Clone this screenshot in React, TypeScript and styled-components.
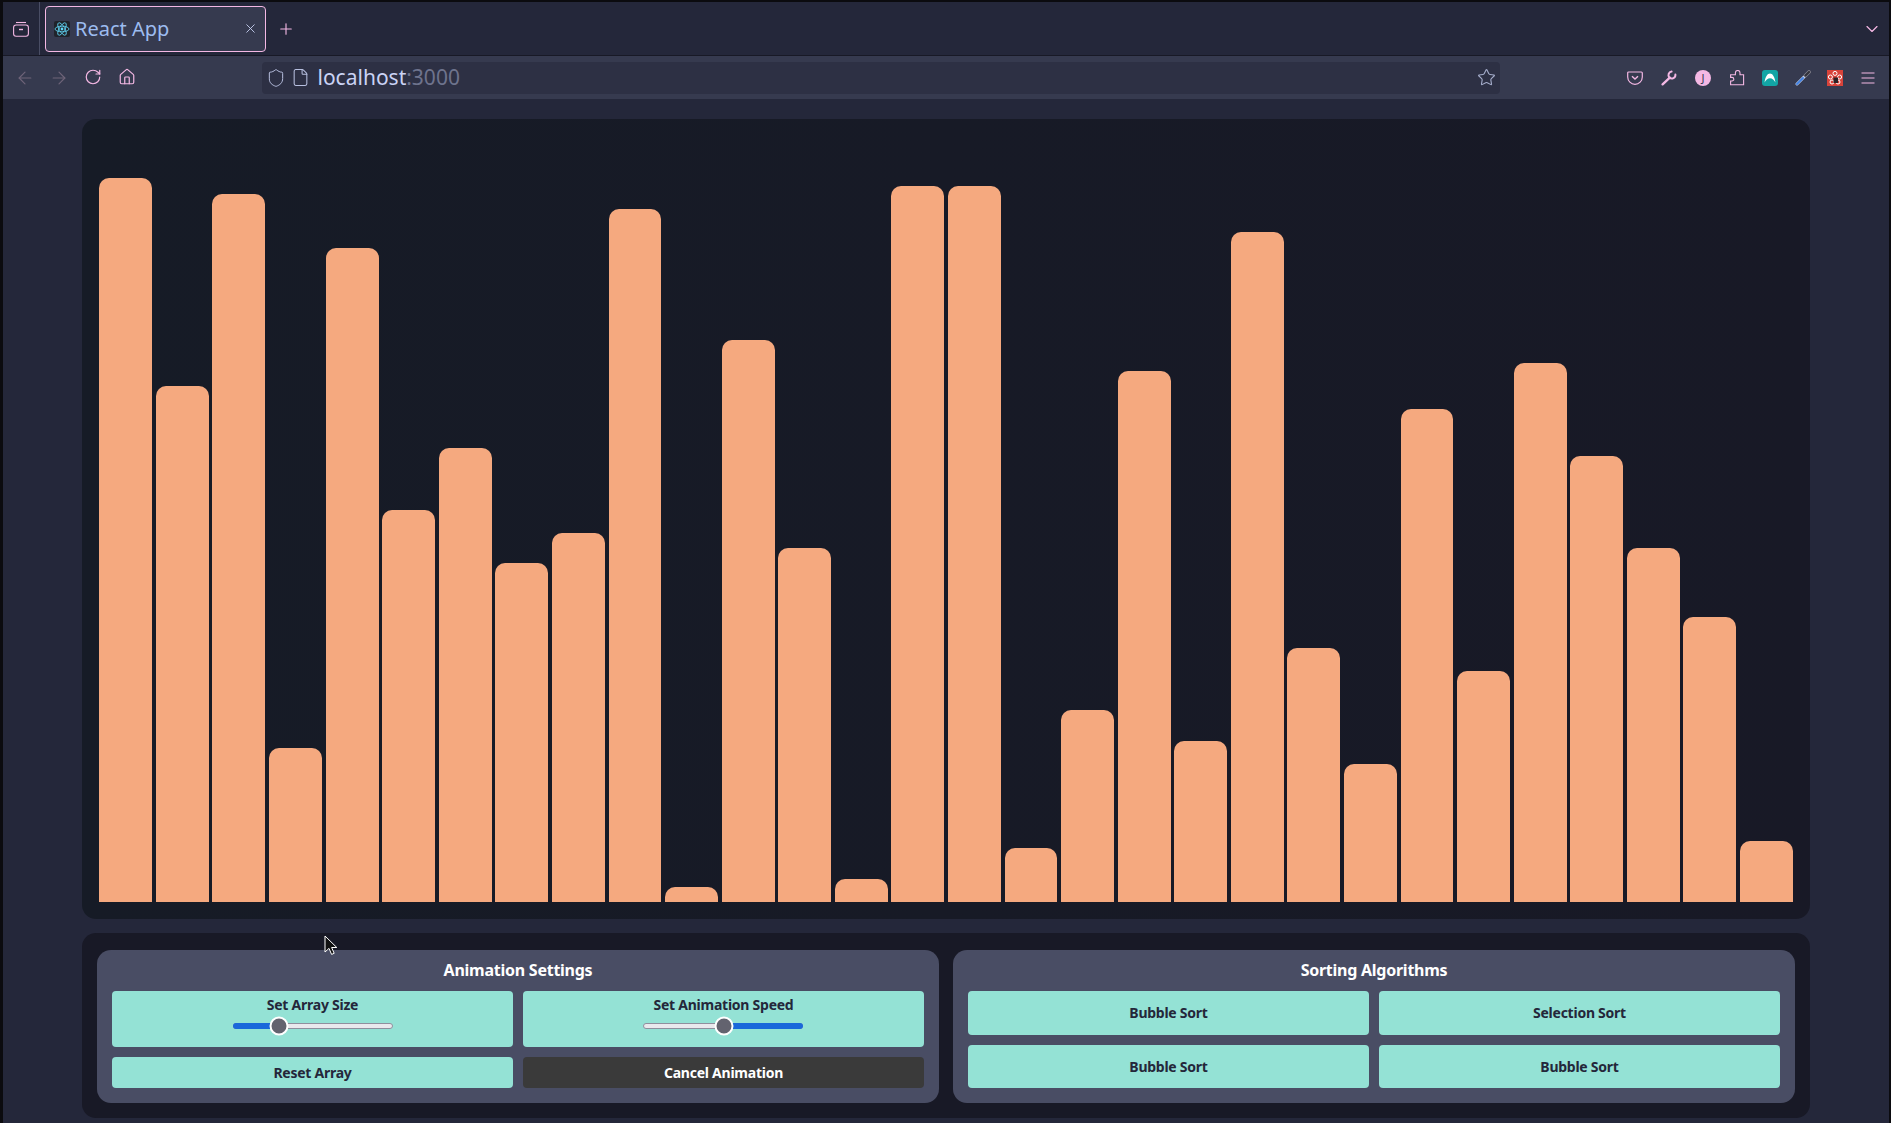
import styled, { createGlobalStyle } from "styled-components";
import {
    ArrowLeft,
    ArrowRight,
    ChevronDown,
    File,
    Home,
    Plus,
    RotateCw,
    Shield,
    Star,
    X
} from "lucide-react";

const PINK = "#f4b8e4";

const GlobalStyle = createGlobalStyle`
    * {
        box-sizing: border-box;
    }

    html, body {
        margin: 0;
        background: #000;
        font-family: "Noto Sans", sans-serif;
    }
`;

const Screen = styled.div`
    position: relative;
    width: 1891px;
    height: 1123px;
    padding: 2px 2px 0 3px;
    background: #0b0b0f;
    overflow: hidden;
`;

const Window = styled.div`
    display: flex;
    flex-direction: column;
    height: 100%;
`;

const TabStrip = styled.div`
    display: flex;
    align-items: center;
    height: 54px;
    flex-shrink: 0;
    background: #24273a;
    border-bottom: 1px solid #181926;
`;

const ViewButton = styled.div`
    display: flex;
    align-items: center;
    justify-content: center;
    width: 37px;
    height: 53px;
    border-right: 1px solid #494d64;
`;

const Tab = styled.div`
    display: flex;
    align-items: center;
    width: 221px;
    height: 46px;
    margin-left: 5px;
    padding: 0 7px 0 8px;
    border: 1px solid ${PINK};
    border-radius: 4px;
    background: #363a4f;
`;

const TabTitle = styled.span`
    flex: 1;
    margin-left: 5px;
    font-size: 20px;
    color: #9dbcf0;
`;

const NewTab = styled.div`
    display: flex;
    margin-left: 11px;
`;

const TabSpacer = styled.div`
    flex: 1;
`;

const ListTabs = styled.div`
    display: flex;
    margin-right: 7px;
`;

const Toolbar = styled.div`
    display: flex;
    align-items: center;
    height: 43px;
    flex-shrink: 0;
    padding-left: 5px;
    background: #363a4f;
`;

const NavIcons = styled.div`
    display: grid;
    grid-template-columns: repeat(4, 34px);
    justify-items: center;
    width: 254px;
`;

const UrlBar = styled.div`
    display: flex;
    align-items: center;
    gap: 5px;
    width: 1238px;
    height: 32px;
    padding: 0 4px;
    border-radius: 4px;
    background: #2d3044;
`;

const UrlText = styled.div`
    flex: 1;
    padding: 0 0 2px 2.5px;
    font-size: 21px;
    color: #cad3f5;
`;

const UrlPort = styled.span`
    color: #6e738d;
`;

const ExtensionIcons = styled.div`
    display: flex;
    align-items: center;
    gap: 18px;
    margin-left: 127px;
`;

const ExtensionGroup = styled.div`
    display: flex;
    align-items: center;
    gap: 16.5px;
    margin-left: -1px;
`;

const Page = styled.main`
    flex: 1;
    display: flex;
    flex-direction: column;
    align-items: center;
    gap: 14px;
    padding-top: 20px;
    background: #24273a;
`;

const Chart = styled.section`
    display: flex;
    align-items: flex-end;
    gap: 3.7px;
    width: 1728px;
    height: 800px;
    padding: 13.2px 17px 16.8px 17.3px;
    border-radius: 14px;
    background: linear-gradient(90deg, #161b26, #181926);
`;

const Bar = styled.div`
    flex: 1;
    border-radius: 10px 10px 0 0;
    background: #f5a97f;
`;

const Controls = styled.section`
    display: grid;
    grid-template-columns: 1fr 1fr;
    gap: 14px;
    width: 1728px;
    height: 185px;
    padding: 17px 15px 15px;
    border-radius: 14px;
    background: #181926;
`;

const Card = styled.div`
    display: flex;
    flex-direction: column;
    padding: 9px 15px 15px;
    border-radius: 14px;
    background: #494d64;
`;

const CardTitle = styled.h2`
    margin: 0 0 10px;
    font-size: 16px;
    line-height: 22px;
    font-weight: 700;
    letter-spacing: -0.25px;
    text-align: center;
    color: #fff;
`;

const ButtonGrid = styled.div<{ $rows: string }>`
    flex: 1;
    display: grid;
    grid-template-columns: 1fr 1fr;
    grid-template-rows: ${(p) => p.$rows};
    gap: 10px;
`;

const ActionButton = styled.button<{ $dark?: boolean }>`
    padding: 0 0 1px;
    border: 0;
    border-radius: 4px;
    font-family: inherit;
    font-size: 14px;
    font-weight: 700;
    letter-spacing: -0.25px;
    color: ${(p) => (p.$dark ? "#fff" : "#24273a")};
    background: ${(p) => (p.$dark ? "#3a3a3a" : "#94e2d5")};
`;

const SliderBox = styled.div`
    display: flex;
    flex-direction: column;
    align-items: center;
    padding-top: 4px;
    border-radius: 4px;
    background: #94e2d5;
`;

const SliderLabel = styled.label`
    font-size: 14px;
    line-height: 19px;
    font-weight: 700;
    letter-spacing: -0.25px;
    color: #24273a;
`;

const Track = styled.div<{ $reverse?: boolean }>`
    position: relative;
    display: flex;
    flex-direction: ${(p) => (p.$reverse ? "row-reverse" : "row")};
    width: 160px;
    height: 6px;
    margin-top: 9px;
    margin-left: ${(p) => (p.$reverse ? "-1px" : "0")};
    border: 1px solid #8f8f9d;
    border-radius: 3px;
    background: #e9e9ed;
`;

const TrackFill = styled.div`
    margin: -1px;
    border-radius: 3px;
    background: #1a68da;
`;

const Thumb = styled.div`
    position: absolute;
    top: 50%;
    width: 19px;
    height: 19px;
    transform: translate(-50%, -50%);
    border: 2px solid #fff;
    border-radius: 50%;
    background: #63636f;
`;

const PointerArrow = styled.svg`
    position: absolute;
    left: 324px;
    top: 935px;
`;

const Avatar = styled.div`
    display: flex;
    align-items: center;
    justify-content: center;
    width: 16px;
    height: 16px;
    border-radius: 50%;
    font-size: 11px;
    color: #363a4f;
    background: ${PINK};
`;

const barValues = [
    94, 67, 92, 20, 85, 51, 59, 44, 48, 90, 2, 73, 46, 3, 93, 93, 7, 25, 69, 21,
    87, 33, 18, 64, 30, 70, 58, 46, 37, 8
];

function ReactFavicon() {
    return (
        <svg width="16" height="16" viewBox="0 0 16 16">
            <rect width="16" height="16" rx="2" fill="#20232a" />
            <g fill="none" stroke="#61dafb" strokeWidth="0.8">
                <ellipse cx="8" cy="8" rx="7" ry="2.8" />
                <ellipse cx="8" cy="8" rx="7" ry="2.8" transform="rotate(60 8 8)" />
                <ellipse cx="8" cy="8" rx="7" ry="2.8" transform="rotate(120 8 8)" />
            </g>
            <circle cx="8" cy="8" r="1.4" fill="#61dafb" />
        </svg>
    );
}

function FirefoxViewIcon() {
    return (
        <svg width="16" height="16" viewBox="0 0 16 16" fill="none" stroke={PINK} strokeWidth="1.1">
            <path d="M3 1.5h10" />
            <rect x="0.6" y="4" width="14.8" height="11.2" rx="2.5" />
            <path d="M6 8.5h4" strokeWidth="1.4" />
        </svg>
    );
}

function PocketIcon() {
    return (
        <svg width="16" height="16" viewBox="0 0 16 16" fill="none" stroke={PINK} strokeWidth="1.2">
            <path d="M1.6 2h12.8a.9.9 0 0 1 .9.9V7a7.3 7.3 0 0 1-14.6 0V2.9a.9.9 0 0 1 .9-.9z" />
            <path d="M5 6.2l3 2.8 3-2.8" strokeWidth="1.4" />
        </svg>
    );
}

function WrenchIcon() {
    return (
        <svg width="16" height="16" viewBox="0 0 16 16" fill="none" stroke={PINK} strokeLinecap="round">
            <path d="M1.6 14.4L8.8 7.6" strokeWidth="2.3" />
            <path d="M14.4 4.6a3.6 3.6 0 0 1-6 3 3.6 3.6 0 0 1 2.2-6" strokeWidth="2" />
        </svg>
    );
}

function PuzzleIcon() {
    return (
        <svg width="16" height="16" viewBox="0 0 16 16" fill="none" stroke={PINK} strokeWidth="1.1">
            <path d="M1.6 14.8V11h1.4a1.8 1.8 0 0 0 0-3.6H1.6V4.8h4.8V2.8a2.3 2.3 0 0 1 4.6 0v2h3.6v10z" />
        </svg>
    );
}

function TealExtensionIcon() {
    return (
        <svg width="16" height="16" viewBox="0 0 16 16">
            <rect width="16" height="16" rx="3" fill="#12a5a5" />
            <path d="M2.6 12.6C3 7 5.6 3.6 8 3.6s5 3.4 5.4 9c-1.2-2.8-3.2-4.4-5.4-4.4s-4.2 1.6-5.4 4.4z" fill="#fff" />
        </svg>
    );
}

function EyedropperIcon() {
    return (
        <svg width="16" height="16" viewBox="0 0 16 16" fill="none" strokeLinecap="round">
            <path d="M2 14L9 7" stroke="#c8d4ee" strokeWidth="3" />
            <path d="M2 14L8 8" stroke="#3f7fe0" strokeWidth="2" />
            <path d="M10.5 5.5l3.5-3.5" stroke="#8a8a94" strokeWidth="3.6" />
            <path d="M10.5 5.5l3.5-3.5" stroke="#33333c" strokeWidth="2.4" />
        </svg>
    );
}

function RedExtensionIcon() {
    return (
        <svg width="16" height="16" viewBox="0 0 16 16">
            <rect width="16" height="16" fill="#d8433a" />
            <g fill="none" stroke="#fff" strokeWidth="1">
                <circle cx="8" cy="3.4" r="2" />
                <circle cx="3.4" cy="7" r="2" />
                <circle cx="12.6" cy="7" r="2" />
                <circle cx="5" cy="12" r="2" />
                <circle cx="11" cy="12" r="2" />
            </g>
            <path d="M6.5 7.5h4.5v5.5h-4.5z" fill="#2b2226" />
        </svg>
    );
}

function MenuIcon() {
    return (
        <svg width="16" height="16" viewBox="0 0 16 16" stroke={PINK} strokeWidth="1.2">
            <path d="M1.5 3h13M1.5 8h13M1.5 13h13" />
        </svg>
    );
}

type SliderProps = {
    label: string;
    percent: number;
    reverse?: boolean;
};

function Slider({ label, percent, reverse }: SliderProps) {
    const fill = reverse ? 100 - percent : percent;

    return (
        <SliderBox>
            <SliderLabel>{label}</SliderLabel>
            <Track $reverse={reverse}>
                <TrackFill style={{ width: `${fill}%` }} />
                <Thumb style={{ left: `${percent}%` }} />
            </Track>
        </SliderBox>
    );
}

export default function App() {
    return (
        <>
            <GlobalStyle />
            <Screen>
                <Window>
                    <TabStrip>
                        <ViewButton>
                            <FirefoxViewIcon />
                        </ViewButton>
                        <Tab>
                            <ReactFavicon />
                            <TabTitle>React App</TabTitle>
                            <X size={15} color="#cad3f5" strokeWidth={1.4} />
                        </Tab>
                        <NewTab>
                            <Plus size={18} color={PINK} strokeWidth={1.5} />
                        </NewTab>
                        <TabSpacer />
                        <ListTabs>
                            <ChevronDown size={20} color={PINK} strokeWidth={1.4} />
                        </ListTabs>
                    </TabStrip>
                    <Toolbar>
                        <NavIcons>
                            <ArrowLeft size={20} color="#6f6479" strokeWidth={1.4} />
                            <ArrowRight size={20} color="#6f6479" strokeWidth={1.4} />
                            <RotateCw size={18} color={PINK} strokeWidth={1.6} />
                            <Home size={18} color={PINK} strokeWidth={1.6} />
                        </NavIcons>
                        <UrlBar>
                            <Shield size={20} color="#b8c0e0" strokeWidth={1.2} />
                            <File size={19} color="#b8c0e0" strokeWidth={1.3} />
                            <UrlText>
                                localhost<UrlPort>:3000</UrlPort>
                            </UrlText>
                            <Star size={19} color="#a5adcb" strokeWidth={1.4} />
                        </UrlBar>
                        <ExtensionIcons>
                            <PocketIcon />
                            <WrenchIcon />
                            <Avatar>J</Avatar>
                            <PuzzleIcon />
                            <ExtensionGroup>
                                <TealExtensionIcon />
                                <EyedropperIcon />
                                <RedExtensionIcon />
                                <MenuIcon />
                            </ExtensionGroup>
                        </ExtensionIcons>
                    </Toolbar>
                    <Page>
                        <Chart>
                            {barValues.map((value, index) => (
                                <Bar key={index} style={{ height: `${value}%` }} />
                            ))}
                        </Chart>
                        <Controls>
                            <Card>
                                <CardTitle>Animation Settings</CardTitle>
                                <ButtonGrid $rows="56px 31px">
                                    <Slider label="Set Array Size" percent={29} />
                                    <Slider label="Set Animation Speed" percent={50.5} reverse />
                                    <ActionButton>Reset Array</ActionButton>
                                    <ActionButton $dark>Cancel Animation</ActionButton>
                                </ButtonGrid>
                            </Card>
                            <Card>
                                <CardTitle>Sorting Algorithms</CardTitle>
                                <ButtonGrid $rows="44px 43px">
                                    <ActionButton>Bubble Sort</ActionButton>
                                    <ActionButton>Selection Sort</ActionButton>
                                    <ActionButton>Bubble Sort</ActionButton>
                                    <ActionButton>Bubble Sort</ActionButton>
                                </ButtonGrid>
                            </Card>
                        </Controls>
                    </Page>
                </Window>
                <PointerArrow width="14" height="21" viewBox="0 0 14 21">
                    <path d="M1 1v16l4-3.6 2.6 6 2.6-1.1-2.6-5.8h5.2z" fill="#111" stroke="#fff" strokeWidth="1" />
                </PointerArrow>
            </Screen>
        </>
    );
}
